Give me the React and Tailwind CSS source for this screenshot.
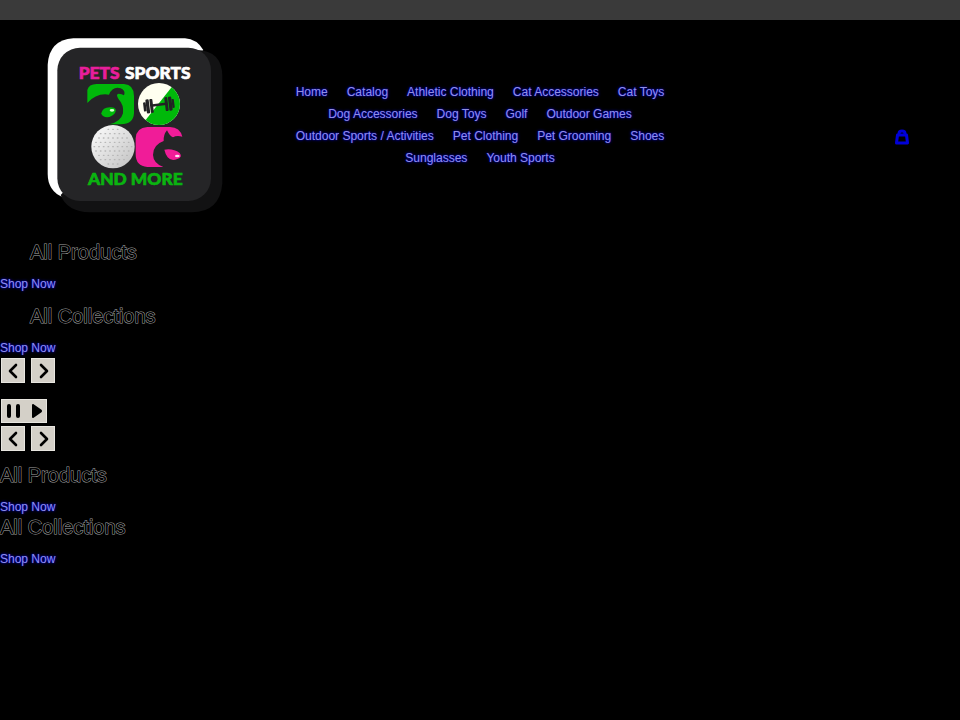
import { FaPlay } from 'react-icons/fa';

const NAV_LINKS = [
    'Home', 'Catalog', 'Athletic Clothing', 'Cat Accessories', 'Cat Toys',
    'Dog Accessories', 'Dog Toys', 'Golf', 'Outdoor Games',
    'Outdoor Sports / Activities', 'Pet Clothing', 'Pet Grooming', 'Shoes',
    'Sunglasses', 'Youth Sports',
];

const SLIDES = ['All Products', 'All Collections'];

const linkStyle = 'text-xs text-[#9090e0] [text-shadow:0_0_1px_#0000ee,0_0_3px_#0000ee]';
const buttonStyle = 'flex h-[25px] w-6 items-center justify-center border border-[#e8e6e0] bg-[#d4d0c8] text-black';

// Dimples on the golf ball
const DIMPLES = [];
for (let row = 0; row < 9; row++) {
    for (let col = 0; col < 9; col++) {
        const x = 193 + col * 14 + (row % 2) * 5;
        const y = 328 + row * 13;
        if (Math.hypot(x - 249, y - 380) < 58) DIMPLES.push([x, y]);
    }
}

const Logo = () => (
    <svg viewBox="51 51 528 528" className="size-[176px]" role="img" aria-label="Pets Sports and More">
        <defs>
            <linearGradient id="ball" x1="0" y1="0" x2="1" y2="1">
                <stop offset="0.2" stopColor="#f2f2f2" />
                <stop offset="1" stopColor="#c0c0c0" />
            </linearGradient>
            <clipPath id="gym"><circle cx="387" cy="252" r="63" /></clipPath>
        </defs>
        <path d="M130 55H465Q500 57 520 90L100 532Q53 515 53 460V135Q57 60 130 55Z" fill="#fff" />
        <path d="M500 90Q577 92 577 170V490Q570 577 485 577H180Q110 575 92 525Z" fill="#121213" />
        <rect x="82" y="83" width="461" height="460" rx="68" fill="#252527" />

        <g fontFamily="Lato, sans-serif" fontWeight="900" fontSize="52" strokeWidth="2">
            <text x="146" y="177" fill="#e81e9b" stroke="#e81e9b">PETS</text>
            <text x="285" y="177" fill="#fff" stroke="#fff">SPORTS</text>
            <text x="174" y="495" fill="#0ab410" stroke="#0ab410">AND MORE</text>
        </g>

        {/* Dog */}
        <path d="M172 249V210Q176 192 200 192H282Q312 194 312 228V280Q310 313 272 313H238Q272 306 279 280Q282 255 266 238Q256 222 266 221Q276 221 282 226Q288 212 272 205Q248 198 237 224Q200 218 172 249Z" fill="#00b90a" />
        <path d="M214 280Q218 260 244 262Q263 264 255 279Q244 294 225 291Q215 288 214 280Z" fill="#00b90a" />
        <ellipse cx="246" cy="271" rx="7" ry="4" fill="#d8ffd0" />

        {/* Dumbbell */}
        <g clipPath="url(#gym)">
            <rect x="320" y="185" width="135" height="135" fill="#fffff0" />
            <path d="M438 185L335 315H460V185Z" fill="#00b90a" />
        </g>
        <g transform="rotate(-7 387 254)" fill="#222224">
            <rect x="340" y="242" width="8" height="27" rx="2" />
            <rect x="348" y="234" width="10" height="42" rx="3" />
            <rect x="360" y="234" width="9" height="42" rx="3" />
            <rect x="367" y="250" width="42" height="8" />
            <rect x="405" y="234" width="9" height="42" rx="3" />
            <rect x="416" y="234" width="10" height="42" rx="3" />
            <rect x="426" y="242" width="7" height="27" rx="2" />
        </g>

        {/* Golf ball */}
        <circle cx="249" cy="380" r="65" fill="url(#ball)" />
        {DIMPLES.map(([x, y]) => (
            <ellipse key={`${x}-${y}`} cx={x} cy={y} rx="3" ry="2" fill="#b4b4b4" />
        ))}

        {/* Cat */}
        <path d="M352 321H420Q450 322 457 350Q440 345 429 352Q420 350 411 331Q400 344 401 363Q369 374 369 405Q370 430 400 441H352Q317 438 317 403V355Q319 323 352 321Z" fill="#f01c98" />
        <path d="M403 389Q430 385 449 399Q459 411 442 417Q424 425 413 412Q406 402 403 389Z" fill="#f01c98" />
        <ellipse cx="442" cy="408" rx="7" ry="4" fill="#ffe0f2" />
    </svg>
);

const Heading = ({ children, className = '' }) => (
    <h2 className={`mb-3 text-xl leading-6 text-black [-webkit-text-stroke:1px_#a0a0a0] [paint-order:stroke] ${className}`}>
        {children}
    </h2>
);

const ShopLink = () => (
    <a href="#shop" className={`block w-fit leading-4 ${linkStyle}`}>Shop Now</a>
);

const Arrow = ({ d }) => (
    <svg viewBox="0 0 24 24" className="size-6 shrink-0" fill="none" stroke="currentColor" strokeWidth="2.6" strokeLinecap="round" strokeLinejoin="round">
        <path d={d} />
    </svg>
);

const SliderArrows = () => (
    <div className="flex gap-1.5 pl-px">
        <button type="button" aria-label="Previous slide" className={buttonStyle}>
            <Arrow d="M15 6L9 12L15 18" />
        </button>
        <button type="button" aria-label="Next slide" className={buttonStyle}>
            <Arrow d="M10 6L16 12L10 18" />
        </button>
    </div>
);

const App = () => {
    return (
        <div className="min-h-screen bg-black font-['Liberation_Sans',sans-serif]">
            <div className="h-5 bg-[#3a3a3a]" />

            <header className="grid grid-cols-[1fr_2fr_1fr] items-center px-[47px] pt-[17px]">
                <a href="#home" className="w-fit"><Logo /></a>
                <nav>
                    <ul className="flex flex-wrap justify-center gap-x-[19px]">
                        {NAV_LINKS.map((name) => (
                            <li key={name} className="flex">
                                <a href="#nav" className={`leading-[22px] ${linkStyle}`}>{name}</a>
                            </li>
                        ))}
                    </ul>
                </nav>
                <a href="#cart" aria-label="Cart" className="justify-self-end px-1 pt-6">
                    <svg viewBox="0 0 14 16" className="h-4 w-3.5" fill="none" stroke="#0000d8">
                        <path d="M2.5 6H11.5L12.5 14H1.5Z" strokeWidth="3" strokeLinejoin="round" />
                        <path d="M4 6V4.5Q4 2 7 2T10 4.5V6" strokeWidth="3" />
                    </svg>
                </a>
            </header>

            <main className="pt-[27px]">
                {SLIDES.map((title) => (
                    <section key={title} className="mb-3 last-of-type:mb-0.5">
                        <Heading className="pl-[30px]">{title}</Heading>
                        <ShopLink />
                    </section>
                ))}
                <SliderArrows />
                <div className="py-4 pb-[3px] pl-px">
                    <button type="button" aria-label="Pause slideshow" className="flex h-6 w-[46px] items-center justify-between border border-[#e8e6e0] bg-[#d4d0c8] px-1 text-black">
                        <svg viewBox="0 0 14 16" className="h-4 w-3.5" fill="currentColor">
                            <rect x="1" y="1" width="4" height="14" rx="2" />
                            <rect x="10" y="1" width="4" height="14" rx="2" />
                        </svg>
                        <FaPlay className="h-3.5 w-2.5" preserveAspectRatio="none" />
                    </button>
                </div>
                <SliderArrows />
                <div className="pt-3">
                    {SLIDES.map((title) => (
                        <div key={title}>
                            <Heading>{title}</Heading>
                            <ShopLink />
                        </div>
                    ))}
                </div>
            </main>
        </div>
    );
};

export default App;
